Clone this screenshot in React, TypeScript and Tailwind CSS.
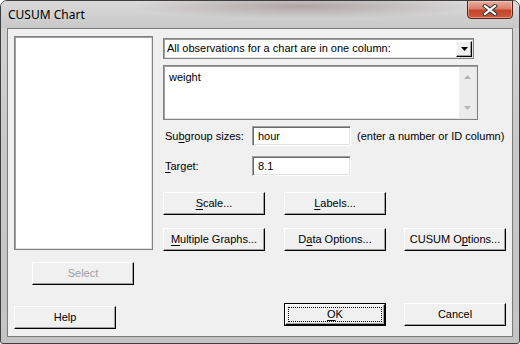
import React from 'react';

const font = 'font-["Liberation_Sans",Arial,sans-serif] text-[11px] text-black';

const Btn: React.FC<{ children: React.ReactNode; className?: string; disabled?: boolean }> = ({
  children,
  className = '',
  disabled,
}) => (
  <div
    className={`w-[102px] h-[23px] flex items-center justify-center bg-[#f0f0f0] border border-t-white border-l-white border-b-black border-r-black shadow-[inset_-1px_-1px_0_#a0a0a0] ${
      disabled ? 'text-[#a0a0a0]' : 'text-black'
    } ${className}`}
  >
    {children}
  </div>
);

const U: React.FC<{ children: React.ReactNode }> = ({ children }) => (
  <span className="underline underline-offset-[2px]">{children}</span>
);

const sunken = 'border border-[#828282] shadow-[inset_1px_1px_0_#a0a0a0,inset_-1px_-1px_0_#e3e3e3] bg-white';
const field =
  'border border-t-[#a0a0a0] border-l-[#a0a0a0] border-b-white border-r-white shadow-[inset_1px_1px_0_#696969,inset_-1px_-1px_0_#e3e3e3] bg-white';

const App: React.FC = () => {
  return (
    <div className="w-[520px] h-[344px] bg-white">
      <div className="w-[520px] h-[344px] flex flex-col rounded-t-[7px] rounded-b-[3px] border border-[#3f3f3f] bg-[linear-gradient(180deg,#d4d4d4,#c9c9c9_40%,#c4c4c4)] overflow-hidden">
        {/* title bar */}
        <div className="h-[27px] flex justify-between bg-[radial-gradient(ellipse_at_58%_20%,#b0a6a4_0%,rgba(176,166,164,0)_40%),linear-gradient(180deg,#dadada,#c8c8c8)]">
          <div className='pl-[7px] pt-[6px] font-["Noto_Sans","Open_Sans",sans-serif] text-[12px] leading-[16px] text-black'>
            CUSUM Chart
          </div>
          <div className="mr-[6px] w-[46px] h-[19px] -mt-px rounded-b-[4px] border border-[#5a231a] bg-[linear-gradient(180deg,#eab0a0_0%,#d88068_45%,#c3442b_55%,#cf5a3d_100%)] shadow-[inset_0_0_0_1px_rgba(255,220,210,0.45)] flex items-center justify-center">
            <svg width="16" height="12" viewBox="0 0 16 12">
              <path d="M3 2 L13 10 M13 2 L3 10" stroke="#3b3b3b" strokeWidth="4.2" strokeLinecap="square" />
              <path d="M3 2 L13 10 M13 2 L3 10" stroke="#ffffff" strokeWidth="2.2" strokeLinecap="square" />
            </svg>
          </div>
        </div>

        {/* client */}
        <div className={`mx-[6px] h-[309px] border border-[#7a7a7a] bg-[#f0f0f0] flex ${font}`}>
          {/* left column */}
          <div className="pl-[6px] pt-[7px] flex flex-col">
            <div className={`w-[139px] h-[214px] ${sunken}`} />
            <Btn disabled className="mt-[12px] ml-[18px] w-[101px]">
              Select
            </Btn>
            <Btn className="mt-[21px] w-[101px]">Help</Btn>
          </div>

          {/* right column */}
          <div className="ml-[10px] pt-[9px] flex flex-col">
            <div className={`w-[311px] h-[21px] flex items-center justify-between ${sunken}`}>
              <span className="pl-[3px]">All observations for a chart are in one column:</span>
              <div className="mr-px w-[16px] h-[16px] flex items-center justify-center bg-[#f0f0f0] border border-t-white border-l-white border-b-black border-r-black shadow-[inset_-1px_-1px_0_#a0a0a0]">
                <svg width="7" height="4" viewBox="0 0 7 4">
                  <path d="M0 0 H7 L3.5 4 Z" fill="#000" />
                </svg>
              </div>
            </div>

            <div className={`mt-[6px] w-[315px] h-[55px] flex justify-between ${sunken}`}>
              <span className="pl-[5px] pt-[3px]">weight</span>
              <div className="my-px mr-px w-[17px] bg-[#ececec] flex flex-col justify-between items-center py-[8px]">
                <svg width="7" height="4" viewBox="0 0 7 4">
                  <path d="M3.5 0 L7 4 H0 Z" fill="#b4b4b4" />
                </svg>
                <svg width="7" height="4" viewBox="0 0 7 4">
                  <path d="M0 0 H7 L3.5 4 Z" fill="#b4b4b4" />
                </svg>
              </div>
            </div>

            <div className="mt-[6px] h-[20px] flex items-center">
              <span className="w-[89px] pl-[2px]">
                Su<U>b</U>group sizes:
              </span>
              <div className={`w-[99px] h-[20px] flex items-center pl-[5px] ${field}`}>hour</div>
              <span className="ml-[6px]">(enter a number or ID column)</span>
            </div>

            <div className="mt-[10px] h-[20px] flex items-center">
              <span className="w-[89px] pl-[2px]">
                <U>T</U>arget:
              </span>
              <div className={`w-[99px] h-[20px] flex items-center pl-[5px] ${field}`}>8.1</div>
            </div>

            <div className="mt-[16px] flex gap-[19px]">
              <Btn>
                <U>S</U>cale...
              </Btn>
              <Btn>
                <U>L</U>abels...
              </Btn>
            </div>

            <div className="mt-[13px] flex">
              <Btn>
                <U>M</U>ultiple Graphs...
              </Btn>
              <Btn className="ml-[19px]">
                D<U>a</U>ta Options...
              </Btn>
              <Btn className="ml-[18px]">
                CUSUM O<U>p</U>tions...
              </Btn>
            </div>

            <div className="mt-[52px] pl-[121px] flex">
              <div className="w-[102px] h-[23px] border border-black flex">
                <div className="flex-1 flex bg-[#f0f0f0] border border-t-white border-l-white border-b-black border-r-black shadow-[inset_-1px_-1px_0_#a0a0a0]">
                  <div className="flex-1 m-[2px] border border-dotted border-black flex items-center justify-center">
                    <U>O</U>K
                  </div>
                </div>
              </div>
              <Btn className="ml-[18px]">Cancel</Btn>
            </div>
          </div>
        </div>
      </div>
    </div>
  );
};

export default App;
